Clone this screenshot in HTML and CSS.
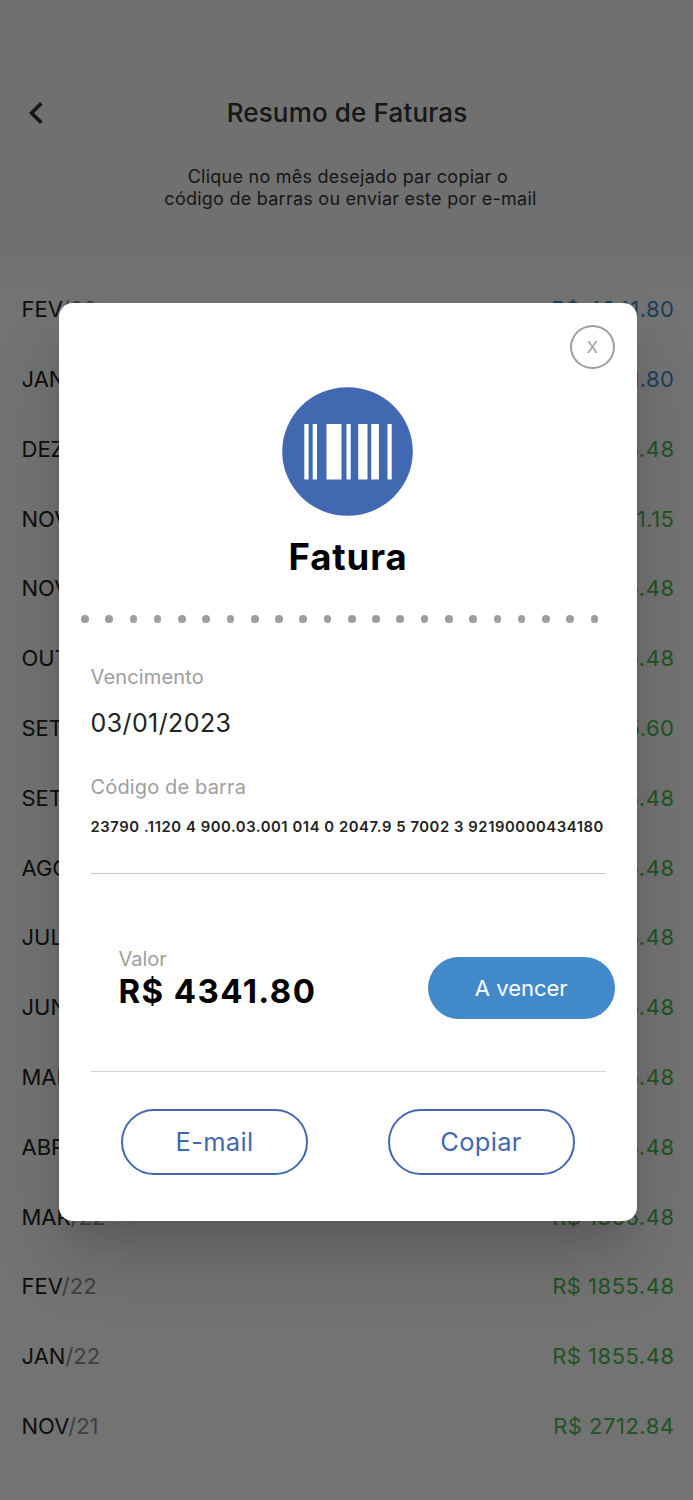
FILE: index.html
```
<!DOCTYPE html>
<html lang="pt-BR">
<head>
<meta charset="utf-8">
<title>Resumo de Faturas</title>
<link rel="stylesheet" href="styles.css">
</head>
<body>
<main class="screen">
  <header class="topbar">
    <svg class="back" width="20" height="26" viewBox="0 0 20 26" fill="none" stroke="#333" stroke-width="3.6"><path d="M15.300 3.400 5.500 13l9.800 9.600"/></svg>
    <h1 class="title">Resumo de Faturas</h1>
  </header>
  <p class="hint">Clique no mês desejado par copiar o&nbsp;<br>código de barras ou enviar este por e-mail</p>
  <ul class="list">
    <li class="row"><span>FEV<i>/23</i></span><b class="open">R$ 4341.80</b></li>
    <li class="row"><span>JAN<i>/23</i></span><b class="open">R$ 4341.80</b></li>
    <li class="row"><span>DEZ<i>/22</i></span><b>R$ 1855.48</b></li>
    <li class="row"><span>NOV<i>/22</i></span><b>R$ 1931.15</b></li>
    <li class="row"><span>NOV<i>/22</i></span><b>R$ 1855.48</b></li>
    <li class="row"><span>OUT<i>/22</i></span><b>R$ 1855.48</b></li>
    <li class="row"><span>SET<i>/22</i></span><b>R$ 1895.60</b></li>
    <li class="row"><span>SET<i>/22</i></span><b>R$ 1855.48</b></li>
    <li class="row"><span>AGO<i>/22</i></span><b>R$ 1855.48</b></li>
    <li class="row"><span>JUL<i>/22</i></span><b>R$ 1855.48</b></li>
    <li class="row"><span>JUN<i>/22</i></span><b>R$ 1855.48</b></li>
    <li class="row"><span>MAI<i>/22</i></span><b>R$ 1855.48</b></li>
    <li class="row"><span>ABR<i>/22</i></span><b>R$ 1855.48</b></li>
    <li class="row"><span>MAR<i>/22</i></span><b>R$ 1855.48</b></li>
    <li class="row"><span>FEV<i>/22</i></span><b>R$ 1855.48</b></li>
    <li class="row"><span>JAN<i>/22</i></span><b>R$ 1855.48</b></li>
    <li class="row"><span>NOV<i>/21</i></span><b>R$ 2712.84</b></li>
  </ul>
</main>
<div class="overlay">
  <section class="dialog">
    <button class="close">X</button>
    <svg class="badge" width="131" height="129" viewBox="0 0 131 129">
      <ellipse cx="65.500" cy="64.500" rx="65.300" ry="64.300" fill="#4169b1"/>
      <path fill="#fff" d="M22.300 37h4.300v55.500h-4.300zM30.700 37h4.300v55.500h-4.300zM44.500 37h15v55.500h-15zM64.500 37h4.200v55.500h-4.200zM76.200 37h9.300v55.500h-9.300zM89.200 37h7.700v55.500h-7.700zM105.500 37h4.200v55.500h-4.200z"/>
    </svg>
    <h2 class="heading">Fatura</h2>
    <div class="dots"><i></i><i></i><i></i><i></i><i></i><i></i><i></i><i></i><i></i><i></i><i></i><i></i><i></i><i></i><i></i><i></i><i></i><i></i><i></i><i></i><i></i><i></i></div>
    <div class="details">
      <div class="label">Vencimento</div>
      <div class="date">03/01/2023</div>
      <div class="label code-label">Código de barra</div>
      <div class="code">23790 .1120 4 900.03.001 014 0 2047.9 5 7002 3 92190000434180</div>
    </div>
    <div class="payment">
      <div>
        <div class="label value-label">Valor</div>
        <div class="value">R$ 4341.80</div>
      </div>
      <div class="status">A vencer</div>
    </div>
    <div class="actions">
      <button class="action email">E-mail</button>
      <button class="action copy">Copiar</button>
    </div>
  </section>
</div>
</body>
</html>
```
FILE: styles.css
```
* { box-sizing: border-box; }
body { margin: 0; font-family: Inter, Roboto, sans-serif; background: #fafafa; }
h1, h2, p, ul { margin: 0; padding: 0; }
i { font-style: normal; }
button { padding: 0; background: none; font-family: inherit; }

.screen {
  height: 1500px;
  overflow: hidden;
  background: linear-gradient(#f3f3f3 0 236px, #fafafa 290px);
}
.topbar {
  display: grid;
  grid-template-columns: 60px 1fr 60px;
  align-items: center;
  padding-top: 93px;
}
.back { margin-left: 26px; }
.title { padding-left: 1px; font-size: 26px; font-weight: 500; line-height: 40px; letter-spacing: .15px; text-align: center; color: #333; }
.hint { padding: 33px 0 0 8px; font-size: 18px; line-height: 22px; letter-spacing: .25px; text-align: center; color: #333; }

.list { list-style: none; padding: 64.300px 18.500px 0 21.500px; }
.row {
  display: flex;
  justify-content: space-between;
  align-items: center;
  height: 69.810px;
  font-size: 22px;
  letter-spacing: .5px;
  color: #222;
}
.row span { letter-spacing: 0; }
.row i { color: #8c8c8c; }
.row b { font-weight: 400; color: #48b848; }
.row .open { color: #4189c8; }

.overlay {
  position: absolute;
  inset: 0;
  height: 1500px;
  padding: 303px 56px 0 59px;
  background: rgba(0, 0, 0, .54);
  overflow: hidden;
}
.dialog {
  display: flex;
  flex-direction: column;
  height: 918px;
  padding-top: 22px;
  border-radius: 14px;
  background: #fff;
  box-shadow: 0 20px 27px -12px rgba(0, 0, 0, .1), 0 40px 66px 0 rgba(0, 0, 0, .16);
}
.close {
  align-self: flex-end;
  width: 45px;
  height: 44px;
  margin-right: 22px;
  border: 2px solid #9e9e9e;
  border-radius: 50%;
  font-size: 16.500px;
  color: #9e9e9e;
}
.badge { align-self: center; margin: 18px 1px 0 0; }
.heading { margin-top: 19px; font-size: 36.500px; font-weight: 700; line-height: 44px; letter-spacing: .9px; text-align: center; color: #000; }
.dots { display: flex; justify-content: space-between; margin: 36px 38.500px 0 22px; }
.dots i { width: 7.700px; height: 7.700px; border-radius: 50%; background: #9e9e9e; }

.details {
  height: 209px;
  margin: 42px 31.500px 0;
  border-bottom: 1.500px solid #c8c8c8;
}
.label { font-size: 20px; line-height: 24px; letter-spacing: .15px; color: #9e9e9e; }
.date { margin-top: 19px; font-size: 25px; line-height: 30px; letter-spacing: .4px; color: #222; }
.code-label { margin-top: 37px; }
.code { margin-top: 19px; font-size: 14.800px; font-weight: 600; line-height: 18px; letter-spacing: .57px; white-space: nowrap; color: #222; }

.payment {
  display: flex;
  justify-content: space-between;
  height: 198.500px;
  margin: 0 31.500px;
  padding: 73px 0 0 28px;
  border-bottom: 1.500px solid #cfd4d2;
}
.value-label { letter-spacing: 0; }
.value { margin-top: 1px; font-size: 33px; font-weight: 700; line-height: 38px; letter-spacing: 1.400px; color: #000; }
.status {
  width: 186.500px;
  height: 62px;
  margin: 10px -9px 0 0;
  border-radius: 31px;
  background: #4189c8;
  font-size: 22px;
  line-height: 62px;
  text-align: center;
  color: #fff;
}
.actions { display: flex; justify-content: space-between; margin: 36.500px 62.500px 0 62px; }
.action {
  width: 187px;
  height: 66px;
  border: 2px solid #4169b1;
  border-radius: 33px;
  font-size: 25.500px;
  letter-spacing: .3px;
  color: #4169b1;
}
```
